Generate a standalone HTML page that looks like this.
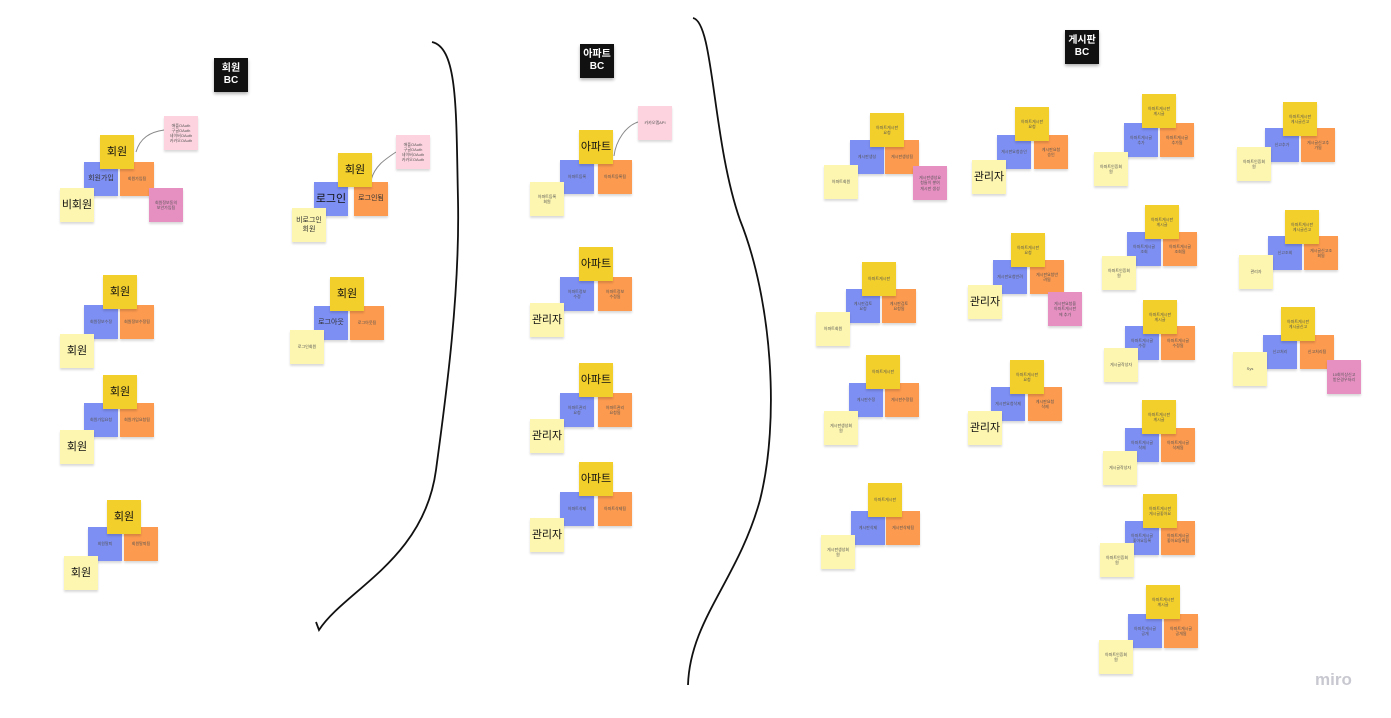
<!DOCTYPE html>
<html><head><meta charset="utf-8"><style>
body{margin:0;width:1391px;height:718px;background:#fff;position:relative;overflow:hidden;font-family:"Liberation Sans","Noto Sans CJK KR",sans-serif}
.n{position:absolute;width:34px;height:34px;box-shadow:0 2px 2px rgba(0,0,0,.15);display:flex;align-items:center;justify-content:center;text-align:center;font-size:4px;color:#555;line-height:1.3;overflow:hidden}
.y{background:#f3cf2c}.b{background:#7e8ff3}.o{background:#fc9a4f}.l{background:#fdf6b1}.p{background:#e690c2}.q{background:#fcd3df}
.k{background:#111;color:#fff;font-size:10px;font-weight:bold;line-height:1.2;box-shadow:0 2px 3px rgba(0,0,0,.3)}
.L{font-size:11px;color:#111}.M{font-size:7px;color:#333}
</style></head><body>
<svg width="1391" height="718" style="position:absolute;left:0;top:0">
<path d="M432,42 C458,48 456,110 458,200 C460,300 444,410 436,470 C424,560 345,590 319,630 L316,622" fill="none" stroke="#111" stroke-width="1.8"/>
<path d="M693,18 C714,22 712,140 740,220 C772,300 780,420 760,500 C738,580 690,620 688,685" fill="none" stroke="#111" stroke-width="1.8"/>
<path d="M136,152 C140,138 150,132 164,130" fill="none" stroke="#888" stroke-width="1"/>
<path d="M371,180 C375,166 384,160 396,152" fill="none" stroke="#888" stroke-width="1"/>
<path d="M614,156 C616,140 626,126 638,122" fill="none" stroke="#888" stroke-width="1"/>
<text x="1315" y="685" font-family="Liberation Sans" font-size="17" font-weight="bold" fill="#c8c8d0">miro</text>
</svg>
<div class="n k" style="left:214px;top:58px">회원<br>BC</div>
<div class="n k" style="left:580px;top:44px">아파트<br>BC</div>
<div class="n k" style="left:1065px;top:30px">게시판<br>BC</div>

<div class="n b M" style="left:84px;top:162px">회원가입</div><div class="n o" style="left:120px;top:162px">회원가입됨</div><div class="n y L" style="left:100px;top:135px">회원</div><div class="n l L" style="left:60px;top:188px">비회원</div><div class="n p" style="left:149px;top:188px">회원정보동의<br>보안가입됨</div><div class="n q" style="left:164px;top:116px">애플OAuth<br>구글OAuth<br>네이버OAuth<br>카카오OAuth</div>
<div class="n b" style="left:84px;top:305px">회원정보수정</div><div class="n o" style="left:120px;top:305px">회원정보수정됨</div><div class="n y L" style="left:103px;top:275px">회원</div><div class="n l L" style="left:60px;top:334px">회원</div>
<div class="n b" style="left:84px;top:403px">회원가입요청</div><div class="n o" style="left:120px;top:403px">회원가입요청됨</div><div class="n y L" style="left:103px;top:375px">회원</div><div class="n l L" style="left:60px;top:430px">회원</div>
<div class="n b" style="left:88px;top:527px">회원탈퇴</div><div class="n o" style="left:124px;top:527px">회원탈퇴됨</div><div class="n y L" style="left:107px;top:500px">회원</div><div class="n l L" style="left:64px;top:556px">회원</div>
<div class="n b L" style="left:314px;top:182px">로그인</div><div class="n o M" style="left:354px;top:182px">로그인됨</div><div class="n y L" style="left:338px;top:153px">회원</div><div class="n l M" style="left:292px;top:208px">비로그인<br>회원</div><div class="n q" style="left:396px;top:135px">애플OAuth<br>구글OAuth<br>네이버OAuth<br>카카오OAuth</div>
<div class="n b M" style="left:314px;top:306px">로그아웃</div><div class="n o" style="left:350px;top:306px">로그아웃됨</div><div class="n y L" style="left:330px;top:277px">회원</div><div class="n l" style="left:290px;top:330px">로그인회원</div>

<div class="n b" style="left:560px;top:160px">아파트등록</div><div class="n o" style="left:598px;top:160px">아파트등록됨</div><div class="n y L" style="left:579px;top:130px">아파트</div><div class="n l" style="left:530px;top:182px">아파트등록<br>회원</div><div class="n q" style="left:638px;top:106px">카카오맵API</div>
<div class="n b" style="left:560px;top:277px">아파트정보<br>수정</div><div class="n o" style="left:598px;top:277px">아파트정보<br>수정됨</div><div class="n y L" style="left:579px;top:247px">아파트</div><div class="n l L" style="left:530px;top:303px">관리자</div>
<div class="n b" style="left:560px;top:393px">아파트관리<br>요청</div><div class="n o" style="left:598px;top:393px">아파트관리<br>요청됨</div><div class="n y L" style="left:579px;top:363px">아파트</div><div class="n l L" style="left:530px;top:419px">관리자</div>
<div class="n b" style="left:560px;top:492px">아파트삭제</div><div class="n o" style="left:598px;top:492px">아파트삭제됨</div><div class="n y L" style="left:579px;top:462px">아파트</div><div class="n l L" style="left:530px;top:518px">관리자</div>

<div class="n b" style="left:850px;top:140px">게시판생성</div><div class="n o" style="left:885px;top:140px">게시판생성됨</div><div class="n y" style="left:870px;top:113px">아파트게시판<br>요청</div><div class="n l" style="left:824px;top:165px">아파트회원</div><div class="n p" style="left:913px;top:166px">게시판생성요<br>청들이 쌓여<br>게시판 생성</div>
<div class="n b" style="left:846px;top:289px">게시판검토<br>요청</div><div class="n o" style="left:882px;top:289px">게시판검토<br>요청됨</div><div class="n y" style="left:862px;top:262px">아파트게시판</div><div class="n l" style="left:816px;top:312px">아파트회원</div>
<div class="n b" style="left:849px;top:383px">게시판수정</div><div class="n o" style="left:885px;top:383px">게시판수정됨</div><div class="n y" style="left:866px;top:355px">아파트게시판</div><div class="n l" style="left:824px;top:411px">게시판생성회<br>원</div>
<div class="n b" style="left:851px;top:511px">게시판삭제</div><div class="n o" style="left:886px;top:511px">게시판삭제됨</div><div class="n y" style="left:868px;top:483px">아파트게시판</div><div class="n l" style="left:821px;top:535px">게시판생성회<br>원</div>

<div class="n b" style="left:997px;top:135px">게시판요청승인</div><div class="n o" style="left:1034px;top:135px">게시판요청<br>승인</div><div class="n y" style="left:1015px;top:107px">아파트게시판<br>요청</div><div class="n l L" style="left:972px;top:160px">관리자</div>
<div class="n b" style="left:993px;top:260px">게시판요청반려</div><div class="n o" style="left:1030px;top:260px">게시판요청반<br>려됨</div><div class="n y" style="left:1011px;top:233px">아파트게시판<br>요청</div><div class="n l L" style="left:968px;top:285px">관리자</div><div class="n p" style="left:1048px;top:292px">게시판요청을<br>아파트게시판<br>에 추가</div>
<div class="n b" style="left:991px;top:387px">게시판요청삭제</div><div class="n o" style="left:1028px;top:387px">게시판요청<br>삭제</div><div class="n y" style="left:1010px;top:360px">아파트게시판<br>요청</div><div class="n l L" style="left:968px;top:411px">관리자</div>

<div class="n b" style="left:1124px;top:123px">아파트게시글<br>추가</div><div class="n o" style="left:1160px;top:123px">아파트게시글<br>추가됨</div><div class="n y" style="left:1142px;top:94px">아파트게시판<br>게시글</div><div class="n l" style="left:1094px;top:152px">아파트인증회<br>원</div>
<div class="n b" style="left:1127px;top:232px">아파트게시글<br>조회</div><div class="n o" style="left:1163px;top:232px">아파트게시글<br>조회됨</div><div class="n y" style="left:1145px;top:205px">아파트게시판<br>게시글</div><div class="n l" style="left:1102px;top:256px">아파트인증회<br>원</div>
<div class="n b" style="left:1125px;top:326px">아파트게시글<br>수정</div><div class="n o" style="left:1161px;top:326px">아파트게시글<br>수정됨</div><div class="n y" style="left:1143px;top:300px">아파트게시판<br>게시글</div><div class="n l" style="left:1104px;top:348px">게시글작성자</div>
<div class="n b" style="left:1125px;top:428px">아파트게시글<br>삭제</div><div class="n o" style="left:1161px;top:428px">아파트게시글<br>삭제됨</div><div class="n y" style="left:1142px;top:400px">아파트게시판<br>게시글</div><div class="n l" style="left:1103px;top:451px">게시글작성자</div>
<div class="n b" style="left:1125px;top:521px">아파트게시글<br>좋아요등록</div><div class="n o" style="left:1161px;top:521px">아파트게시글<br>좋아요등록됨</div><div class="n y" style="left:1143px;top:494px">아파트게시판<br>게시글좋아요</div><div class="n l" style="left:1100px;top:543px">아파트인증회<br>원</div>
<div class="n b" style="left:1128px;top:614px">아파트게시글<br>공개</div><div class="n o" style="left:1164px;top:614px">아파트게시글<br>공개됨</div><div class="n y" style="left:1146px;top:585px">아파트게시판<br>게시글</div><div class="n l" style="left:1099px;top:640px">아파트인증회<br>원</div>

<div class="n b" style="left:1265px;top:128px">신고추가</div><div class="n o" style="left:1301px;top:128px">게시글신고추<br>가됨</div><div class="n y" style="left:1283px;top:102px">아파트게시판<br>게시글신고</div><div class="n l" style="left:1237px;top:147px">아파트인증회<br>원</div>
<div class="n b" style="left:1268px;top:236px">신고조회</div><div class="n o" style="left:1304px;top:236px">게시글신고조<br>회됨</div><div class="n y" style="left:1285px;top:210px">아파트게시판<br>게시글신고</div><div class="n l" style="left:1239px;top:255px">관리자</div>
<div class="n b" style="left:1263px;top:335px">신고처리</div><div class="n o" style="left:1300px;top:335px">신고처리됨</div><div class="n y" style="left:1281px;top:307px">아파트게시판<br>게시글신고</div><div class="n l" style="left:1233px;top:352px">Sys</div><div class="n p" style="left:1327px;top:360px">10회이상신고<br>받은경우처리</div>
</body></html>
